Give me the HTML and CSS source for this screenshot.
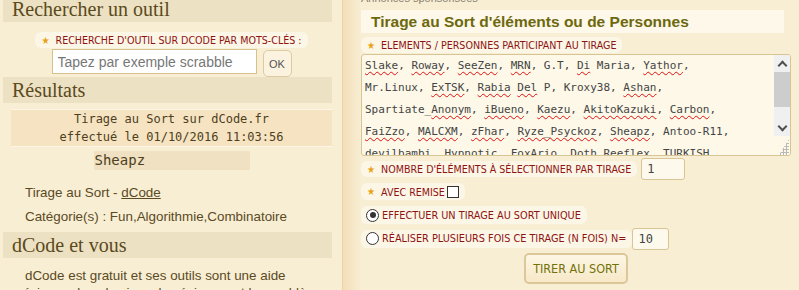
FILE: index.html
```html
<!DOCTYPE html>
<html lang="fr">

<head>
    <meta charset="UTF-8">
    <meta name="viewport" content="width=device-width, initial-scale=1.0">
    <title>Tirage au Sort - dCode</title>
    <link rel="stylesheet" href="styles.css">
</head>

<body>
    <div class="page">
        <aside class="side">
            <h2 class="band">Rechercher un outil</h2>
            <form class="search">
                <span class="lbl"><span class="star">★</span>Recherche d'outil sur dCode par mots-clés :</span>
                <div class="search-row">
                    <input type="text" class="search-input" placeholder="Tapez par exemple scrabble">
                    <button type="button" class="ok">OK</button>
                </div>
            </form>

            <h2 class="band">Résultats</h2>
            <div class="out">
                <div class="result">Tirage au Sort sur dCode.fr<br>effectué le 01/10/2016 11:03:56</div>
                <div class="winner">Sheapz</div>
            </div>
            <p class="meta">Tirage au Sort - <a href="javascript:;">dCode</a></p>
            <p class="meta">Catégorie(s) : Fun,Algorithmie,Combinatoire</p>

            <h2 class="band">dCode et vous</h2>
            <p class="text">dCode est gratuit et ses outils sont une aide précieuse dans les jeux, les énigmes et les problèmes à résoudre au quotidien !</p>
        </aside>

        <div class="divider"></div>

        <main class="main">
            <div class="ads">Annonces sponsorisées</div>
            <h1 class="title">Tirage au Sort d'éléments ou de Personnes</h1>

            <div class="row row-names">
                <span class="lbl"><span class="star">★</span>Elements / Personnes participant au tirage</span>
            </div>
            <div class="names">
                <div class="names-text">
                    <div><u>Slake</u>, <u>Roway</u>, <u>SeeZen</u>, <u>MRN</u>, G.T, <u>Di</u> Maria, <u>Yathor</u>,</div>
                    <div>Mr.Linux, <u>ExTSK</u>, <u>Rabia</u> <u>Del</u> P, Kroxy38, <u>Ashan</u>,</div>
                    <div>Spartiate_<u>Anonym</u>, <u>iBueno</u>, <u>Kaezu</u>, <u>AkitoKazuki</u>, <u>Carbon</u>,</div>
                    <div><u>FaiZzo</u>, <u>MALCXM</u>, <u>zFhar</u>, <u>Ryze_Psyckoz</u>, <u>Sheapz</u>, Antoo-R11,</div>
                    <div><u>devilbambi</u>, <u>Hypnotic</u>, <u>FoxArio</u>, <u>Doth</u> <u>Reeflex</u>, TURKISH,</div>
                </div>
                <div class="scroll">
                    <span class="arrow up"></span>
                    <span class="thumb"></span>
                    <span class="track"></span>
                    <span class="arrow down"></span>
                    <span class="grip"></span>
                </div>
            </div>

            <div class="row row-count">
                <span class="lbl"><span class="star">★</span>Nombre d'éléments à sélectionner par tirage</span>
                <input type="text" class="num num-count" value="1">
            </div>
            <div class="row row-remise">
                <span class="lbl"><span class="star">★</span>Avec remise <span class="check"></span></span>
            </div>
            <div class="row row-once">
                <span class="lbl lbl-radio"><span class="radio on"></span>Effectuer un tirage au sort unique</span>
            </div>
            <div class="row row-many">
                <span class="lbl lbl-radio"><span class="radio"></span>Réaliser plusieurs fois ce tirage (N fois) N=</span>
                <input type="text" class="num num-many" value="10">
            </div>
            <div class="actions">
                <button type="button" class="go">Tirer au sort</button>
            </div>
        </main>
    </div>
</body>

</html>
```

FILE: styles.css
```css
* {
    box-sizing: border-box;
}

body {
    margin: 0;
    background-color: #f8eed4;
    color: #5a4a24;
    overflow: hidden;
}

.page {
    display: flex;
    margin-top: -4px;
}

/* colonne de gauche */

.side {
    width: 332px;
    padding-left: 3px;
}

.band {
    margin: 0;
    height: 26px;
    padding-left: 9px;
    font: normal 20px/26px "Liberation Serif", serif;
    color: #5b4a1c;
    background-color: #ece1c3;
}

.lbl {
    display: inline-flex;
    align-items: center;
    height: 16px;
    padding: 0 6px 0 6px;
    border-radius: 6px;
    background-color: #fcf6e6;
    color: #8e1313;
    font: 10.6px "DejaVu Sans Condensed", "DejaVu Sans", sans-serif;
    text-transform: uppercase;
    white-space: nowrap;
}

.star {
    margin-right: 6px;
    color: #eaa212;
    font-size: 10px;
}

.search {
    display: flex;
    flex-direction: column;
    align-items: center;
    margin: 10px 0 0 8px;
}

.search-row {
    display: flex;
    align-items: flex-start;
    gap: 6px;
    margin-top: 1px;
}

.search-input {
    width: 205px;
    height: 25px;
    padding: 0 5px;
    border: 1px solid #d6c08c;
    background-color: #fff;
    font: 14px "Liberation Sans", sans-serif;
    color: #333;
}

.search-input::placeholder {
    color: #777;
}

.ok {
    width: 29px;
    height: 27px;
    margin-top: 1px;
    padding: 0;
    border: 1px solid #dccba2;
    border-radius: 5px;
    background-color: #fbf3df;
    color: #555;
    font: 11px "Liberation Sans", sans-serif;
}

.out {
    margin: 6px 0 0 8px;
}

.result {
    border-top: 1px solid #fff6e6;
    border-bottom: 1px solid #fff6e6;
    background-color: #f6e3c2;
    font: 12px/18px "DejaVu Sans Mono", monospace;
    color: #4d3f20;
    text-align: center;
}

.winner {
    width: 156px;
    height: 19px;
    margin: 4px auto 0;
    padding-left: 1px;
    background-color: #efe1c1;
    font: 14px/19px "DejaVu Sans Mono", monospace;
    color: #4d3f20;
}

.meta {
    margin: 0;
    padding-left: 22px;
    font: 13.4px "Liberation Sans", sans-serif;
    color: #5a4a24;
}

.meta:first-of-type {
    margin-top: 15px;
}

.meta + .meta {
    margin-top: 9px;
}

.meta a {
    color: #5a4a24;
}

.side .meta + .band {
    margin-top: 8px;
}

.text {
    margin: 9px 0 0;
    padding-left: 8px;
    text-indent: 14px;
    font: 13.4px/17px "Liberation Sans", sans-serif;
}

/* separation */

.divider {
    flex: none;
    width: 19px;
    height: 300px;
    margin-left: 10px;
    border-left: 1px solid #ead3a9;
    background: linear-gradient(to right, #f3deb8, #f8eed4);
}

/* colonne de droite */

.main {
    width: 430px;
}

.ads {
    height: 18px;
    margin-top: -4px;
    font: 11px/12px "Liberation Sans", sans-serif;
    color: #8a8170;
}

.title {
    margin: 0 7px 4px 0;
    height: 23px;
    padding-left: 10px;
    background-color: #fdf8e9;
    font: bold 15.5px/24px "Liberation Sans", sans-serif;
    color: #6d680e;
}

.names {
    display: flex;
    height: 102px;
    margin-top: 1px;
    border: 1px solid #d8c596;
    border-radius: 3px;
    background-color: #fdf8e8;
    overflow: hidden;
}

.names-text {
    flex: 1;
    padding: 0 0 0 3px;
    font: 11px/22px "DejaVu Sans Mono", monospace;
    color: #444;
    white-space: nowrap;
    overflow: hidden;
}

.names-text u {
    text-decoration: underline wavy #e01010;
    text-decoration-thickness: 1px;
    text-underline-offset: 2px;
}

.scroll {
    display: flex;
    flex-direction: column;
    flex: none;
    width: 16px;
    background-color: #fdf8e8;
}

.arrow {
    display: flex;
    align-items: center;
    justify-content: center;
    height: 17px;
    background-color: #f0f0f0;
}

.arrow::before {
    content: "";
    width: 5px;
    height: 5px;
    border-left: 2px solid #505050;
    border-top: 2px solid #505050;
}

.arrow.up::before {
    margin-top: 3px;
    transform: rotate(45deg);
}

.arrow.down::before {
    margin-top: -3px;
    transform: rotate(225deg);
}

.thumb {
    height: 35px;
    background-color: #cdcdcd;
}

.track {
    flex: 1;
    background-color: #f0f0f0;
}

.grip {
    height: 16px;
    background: radial-gradient(circle, #b8b8b8 1px, transparent 1.2px) 0 0 / 3px 3px;
    margin: 3px 1px 0 5px;
    clip-path: polygon(100% 0, 100% 100%, 0 100%);
}

.row {
    display: flex;
    align-items: center;
    gap: 4px;
}

.row-names {
    height: 16px;
}

.row-count {
    height: 22px;
    margin-top: 2px;
}

.row-remise {
    height: 17px;
    margin-top: 3px;
}

.row-remise .lbl {
    height: 17px;
}

.row-once {
    height: 18px;
    margin-top: 6px;
}

.row-many {
    height: 21px;
    margin-top: 4px;
    gap: 0;
}

.lbl-radio {
    height: 18px;
    padding-left: 5px;
    font-size: 10.8px;
}

.check {
    width: 12px;
    height: 12px;
    margin-left: 2px;
    border: 1px solid #333;
    background-color: #fff;
}

.radio {
    display: flex;
    align-items: center;
    justify-content: center;
    width: 13px;
    height: 13px;
    margin-right: 3px;
    border: 1.5px solid #333;
    border-radius: 50%;
    background-color: #fff;
}

.radio.on::after {
    content: "";
    width: 6px;
    height: 6px;
    border-radius: 50%;
    background-color: #333;
}

.num {
    height: 22px;
    padding: 0 5px;
    border: 1px solid #d8c596;
    border-radius: 3px;
    background-color: #fdf9ec;
    font: 12px "DejaVu Sans Mono", monospace;
    color: #444;
}

.num-count {
    width: 44px;
}

.num-many {
    width: 37px;
}

.actions {
    display: flex;
    justify-content: center;
    margin-top: 4px;
}

.go {
    width: 104px;
    height: 31px;
    padding: 0;
    border: 2px solid #dcc79b;
    border-radius: 5px;
    background: linear-gradient(#fdf6e4, #f7e9c8);
    color: #74720a;
    font: 12.5px "DejaVu Sans Condensed", "DejaVu Sans", sans-serif;
    text-transform: uppercase;
    white-space: nowrap;
}
```
